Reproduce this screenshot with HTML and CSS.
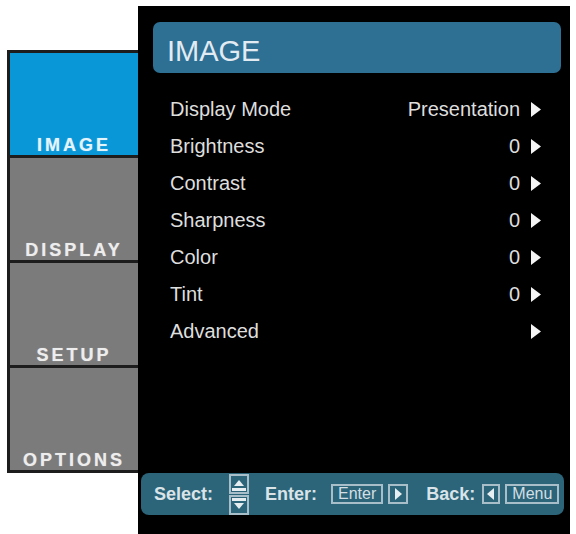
FILE: index.html
```html
<!DOCTYPE html>
<html lang="en">
<head>
<meta charset="utf-8">
<title>IMAGE</title>
<link rel="stylesheet" href="styles.css">
</head>
<body>
<div class="osd">
  <nav class="tabs">
    <div class="tab tab-active">IMAGE</div>
    <div class="tab">DISPLAY</div>
    <div class="tab">SETUP</div>
    <div class="tab">OPTIONS</div>
  </nav>

  <section class="panel">
    <header class="title">IMAGE</header>

    <ul class="items">
      <li class="item"><span class="label">Display Mode</span><span class="value">Presentation</span><svg class="arrow" viewBox="0 0 10 15"><polygon points="0,0 10,7.5 0,15"/></svg></li>
      <li class="item"><span class="label">Brightness</span><span class="value">0</span><svg class="arrow" viewBox="0 0 10 15"><polygon points="0,0 10,7.5 0,15"/></svg></li>
      <li class="item"><span class="label">Contrast</span><span class="value">0</span><svg class="arrow" viewBox="0 0 10 15"><polygon points="0,0 10,7.5 0,15"/></svg></li>
      <li class="item"><span class="label">Sharpness</span><span class="value">0</span><svg class="arrow" viewBox="0 0 10 15"><polygon points="0,0 10,7.5 0,15"/></svg></li>
      <li class="item"><span class="label">Color</span><span class="value">0</span><svg class="arrow" viewBox="0 0 10 15"><polygon points="0,0 10,7.5 0,15"/></svg></li>
      <li class="item"><span class="label">Tint</span><span class="value">0</span><svg class="arrow" viewBox="0 0 10 15"><polygon points="0,0 10,7.5 0,15"/></svg></li>
      <li class="item"><span class="label">Advanced</span><span class="value"></span><svg class="arrow" viewBox="0 0 10 15"><polygon points="0,0 10,7.5 0,15"/></svg></li>
    </ul>

    <footer class="hints">
      <span class="hint-label">Select:</span>
      <svg class="updown" viewBox="0 0 20 41">
        <rect class="key-edge" x="1" y="1" width="18" height="18"/>
        <polygon class="key-mark" points="5,12 10,6 15,12"/>
        <rect class="key-mark" x="3" y="14" width="14" height="3"/>
        <rect class="key-edge" x="1" y="22" width="18" height="18"/>
        <rect class="key-mark" x="3" y="24" width="14" height="3"/>
        <polygon class="key-mark" points="5,29 15,29 10,35"/>
      </svg>
      <span class="hint-label hint-enter">Enter:</span>
      <span class="key key-enter">Enter</span>
      <svg class="key-icon key-right" viewBox="0 0 20 20">
        <rect class="key-edge" x="1" y="1" width="18" height="18"/>
        <polygon class="key-mark" points="7,4 14,10 7,16"/>
      </svg>
      <span class="hint-label hint-back">Back:</span>
      <svg class="key-icon key-left" viewBox="0 0 18 20">
        <rect class="key-edge" x="1" y="1" width="16" height="18"/>
        <polygon class="key-mark" points="12,4 5,10 12,16"/>
      </svg>
      <span class="key key-menu">Menu</span>
    </footer>
  </section>
</div>
</body>
</html>
```

FILE: styles.css
```css
html, body {
  margin: 0;
  padding: 0;
  background: #ffffff;
}

body {
  font-family: "Liberation Sans", Arial, sans-serif;
}

.osd {
  display: flex;
  align-items: flex-start;
  height: 534px;
  overflow: hidden;
}

/* left column of menu tabs */
.tabs {
  margin: 50px 0 0 7px;
  width: 128px;
  border: 3px solid #1d1d1d;
  border-right: 0;
  background: #1d1d1d;
  display: flex;
  flex-direction: column;
  gap: 3px;
}

.tab {
  height: 102px;
  box-sizing: border-box;
  padding: 0 0 1px 0;
  display: flex;
  align-items: flex-end;
  justify-content: center;
  background: #7b7b7b;
  color: #ededed;
  font-weight: bold;
  font-size: 18px;
  line-height: 18px;
  letter-spacing: 3px;
  text-shadow: 0 0 1px rgba(255, 255, 255, 0.5);
}

.tab-active {
  background: #0a97d8;
  color: #e4f4fb;
}

/* black settings panel */
.panel {
  margin-top: 6px;
  width: 432px;
  height: 528px;
  box-sizing: border-box;
  padding: 16px 9px 19px 15px;
  background: #000000;
  display: flex;
  flex-direction: column;
}

.title {
  height: 51px;
  box-sizing: border-box;
  padding: 8px 14px 0;
  line-height: 43px;
  font-size: 29px;
  color: #e2ebf1;
  background: #2e6f94;
  border-radius: 7px;
}

.items {
  list-style: none;
  margin: 18px 0 0;
  padding: 0 20px 0 17px;
}

.item {
  display: flex;
  align-items: center;
  height: 37px;
  line-height: 37px;
  font-size: 20px;
  color: #dedede;
}

.label {
  flex: 1;
}

.arrow {
  width: 10px;
  height: 15px;
  margin-left: 11px;
  fill: #f4f4f4;
}

/* key hints bar */
.hints {
  margin: auto -3px 0 -12px;
  height: 42px;
  box-sizing: border-box;
  padding-left: 13px;
  display: flex;
  align-items: center;
  background: #2c6579;
  border-radius: 8px;
  color: #d9e3e8;
}

.hint-label {
  font-weight: bold;
  font-size: 18px;
  line-height: 18px;
}

.updown {
  width: 20px;
  height: 41px;
  margin-left: 16px;
}

.hint-enter {
  margin-left: 16px;
}

.hint-back {
  margin-left: 18px;
}

.key {
  height: 20px;
  box-sizing: border-box;
  border: 2px solid #a8bfca;
  padding: 0 5px;
  display: flex;
  align-items: center;
  font-size: 16px;
  line-height: 16px;
  color: #d3dfe4;
}

.key-enter {
  margin-left: 14px;
}

.key-menu {
  margin-left: 5px;
}

.key-icon {
  height: 20px;
}

.key-right {
  width: 20px;
  margin-left: 5px;
}

.key-left {
  width: 18px;
  margin-left: 7px;
}

.key-edge {
  fill: none;
  stroke: #a8bfca;
  stroke-width: 2;
}

.key-mark {
  fill: #e6eef1;
}
```
